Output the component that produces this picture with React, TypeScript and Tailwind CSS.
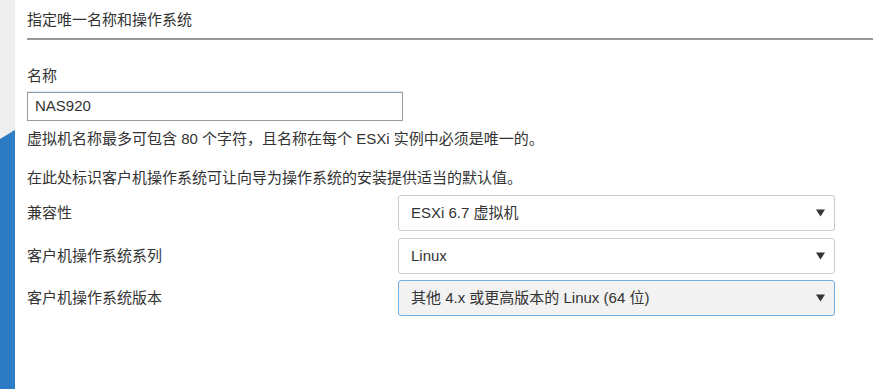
import React from "react";

const font = "font-['Liberation_Sans','Noto_Sans_CJK_SC',sans-serif]";

function Caret() {
  return (
    <svg width="9" height="8" viewBox="0 0 9 8" className="shrink-0">
      <polygon points="0,0.5 9,0.5 4.5,7.5" fill="#333" />
    </svg>
  );
}

function SelectRow({ label, value, active }: { label: string; value: string; active?: boolean }) {
  return (
    <div className="flex items-center h-[36px]">
      <div className="w-[371px] shrink-0 text-[15px] text-[#333] leading-[20px]">{label}</div>
      <div
        className={
          active
            ? "w-[437px] h-full flex items-center justify-between pl-[12px] pr-[9px] rounded-[3px] border border-[#6fb0e6] bg-[#f2f2f2]"
            : "w-[437px] h-full flex items-center justify-between pl-[12px] pr-[9px] rounded-[3px] border border-[#cccccc] bg-white"
        }
      >
        <span className="text-[15px] text-[#333] leading-[20px]">{value}</span>
        <Caret />
      </div>
    </div>
  );
}

export default function App() {
  return (
    <div className={`flex w-[883px] h-[389px] bg-white overflow-hidden ${font}`}>
      <div className="w-[15px] h-full shrink-0">
        <svg width="15" height="389" viewBox="0 0 15 389">
          <rect x="0" y="0" width="15" height="389" fill="#eeeeee" />
          <polygon points="0,139 15,130 15,389 0,389" fill="#2b7bc5" />
          <rect x="12" y="131" width="1" height="258" fill="#3a86cb" />
        </svg>
      </div>
      <div className="flex-1 flex flex-col pl-[12px] pr-[10px] pt-[10px]">
        <div className="text-[15px] leading-[20px] text-[#333]">指定唯一名称和操作系统</div>
        <div className="mt-[8px] h-[2px] bg-[#999999]" />
        <div className="mt-[26px] text-[15px] leading-[20px] text-[#333]">名称</div>
        <div className="mt-[6px] w-[376px] h-[29px] border border-[#999999] flex items-center pl-[7px] text-[15px] text-[#333] shadow-[0_-1px_0_#d8eefa]">
          NAS920
        </div>
        <div className="mt-[8px] text-[15px] leading-[20px] text-[#333]">
          虚拟机名称最多可包含 80 个字符，且名称在每个 ESXi 实例中必须是唯一的。
        </div>
        <div className="mt-[19px] text-[15px] leading-[20px] text-[#333]">
          在此处标识客户机操作系统可让向导为操作系统的安装提供适当的默认值。
        </div>
        <div className="mt-[7px] flex flex-col gap-[6.5px]">
          <SelectRow label="兼容性" value="ESXi 6.7 虚拟机" />
          <SelectRow label="客户机操作系统系列" value="Linux" />
          <SelectRow label="客户机操作系统版本" value="其他 4.x 或更高版本的 Linux (64 位)" active />
        </div>
      </div>
    </div>
  );
}
